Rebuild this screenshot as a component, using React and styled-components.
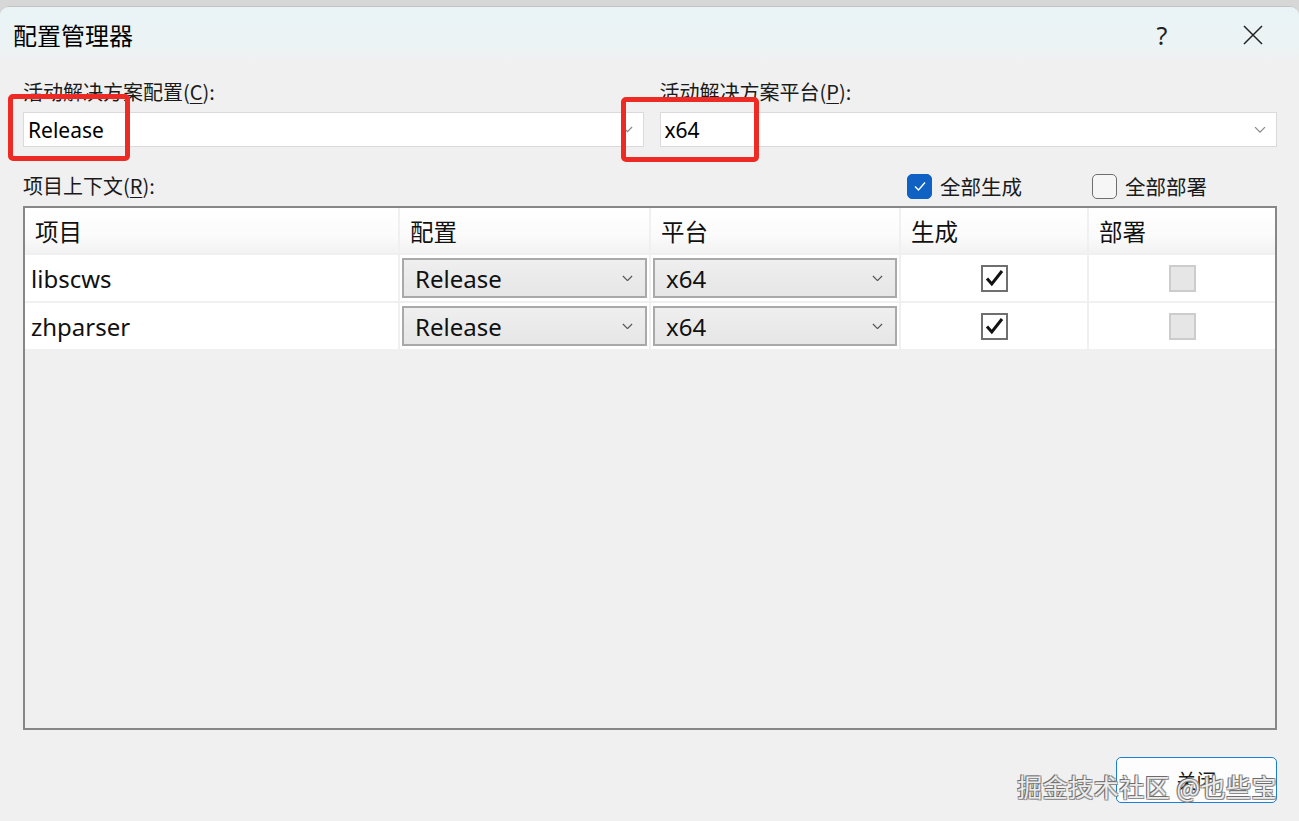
import styled, { createGlobalStyle } from 'styled-components';

const GlobalStyle = createGlobalStyle`
  html, body {
    margin: 0;
    padding: 0;
    background: #d7d7d7;
    overflow: hidden;
  }
  body {
    font-family: "Noto Sans", "Noto Sans CJK SC", sans-serif;
    color: #000;
  }
`;

const Window = styled.div`
  position: relative;
  margin-top: 6px;
  height: 815px;
  background: #f0f0f0;
  border-radius: 9px 9px 0 0;
  border-top: 1px solid #c4c4c4;
  box-sizing: border-box;
  display: flex;
  flex-direction: column;
`;

const TitleBar = styled.div`
  height: 56px;
  display: flex;
  align-items: center;
  padding: 0 31px 0 13px;
  gap: 61px;
  border-radius: 9px 9px 0 0;
  background: linear-gradient(180deg, #e9f3f6 0%, #ecf3f4 70%, #f0f0f0 100%);
`;

const Title = styled.div`
  flex: 1;
  font-family: "Noto Sans CJK SC", sans-serif;
  font-size: 24px;
  padding-bottom: 2px;
`;

const TitleButton = styled.div`
  width: 30px;
  display: flex;
  justify-content: center;
  align-items: center;
  font-family: "Noto Sans", sans-serif;
  font-size: 25px;
  color: #222;
`;

const Body = styled.div`
  flex: 1;
  display: flex;
  flex-direction: column;
  padding: 16px 22px 0 23px;
`;

const TopRow = styled.div`
  display: flex;
  gap: 16px;
`;

const Field = styled.div`
  flex: ${p => p.$flex};
  display: flex;
  flex-direction: column;
  gap: 7px;
`;

const Label = styled.div`
  font-family: "Noto Sans CJK SC", sans-serif;
  font-size: 20px;
  line-height: 26px;
  color: #1a1a1a;
  u { text-decoration-thickness: 1px; text-underline-offset: 3px; }
`;

const Combo = styled.div`
  height: 35px;
  box-sizing: border-box;
  background: #fff;
  border: 1px solid #dadada;
  display: flex;
  align-items: center;
  padding: 0 10px 0 4px;
  font-size: 21px;
`;

const ComboText = styled.span`
  flex: 1;
`;

const Chevron = ({ color = '#6b6b6b', size = 12 }) => (
  <svg width={size} height={size * 0.6} viewBox="0 0 12 7" fill="none">
    <path d="M1 1l5 5 5-5" stroke={color} strokeWidth="1.3" />
  </svg>
);

const ContextRow = styled.div`
  display: flex;
  align-items: center;
  margin-top: 26px;
  height: 26px;
`;

const Spacer = styled.div`
  flex: 1;
`;

const CheckLabel = styled.label`
  display: flex;
  align-items: center;
  gap: 8px;
  width: ${p => p.$w}px;
  font-family: "Noto Sans CJK SC", sans-serif;
  font-size: 20.5px;
  color: #1a1a1a;
`;

const FluentBox = styled.span`
  width: 25px;
  height: 25px;
  box-sizing: border-box;
  border-radius: 5px;
  display: flex;
  align-items: center;
  justify-content: center;
  background: ${p => (p.$on ? '#0f62c4' : '#f6f6f6')};
  border: 1.5px solid ${p => (p.$on ? '#0f62c4' : '#6e6e6e')};
`;

const Table = styled.div`
  margin-top: 7px;
  height: 524px;
  box-sizing: border-box;
  border: 2px solid #878787;
  background: #f0f0f0;
  display: grid;
  grid-template-columns: 373px 249px 248px 186px 1fr;
  grid-auto-rows: min-content;
  column-gap: 2px;
  row-gap: 2px;
`;

const HeadCell = styled.div`
  height: 45px;
  display: flex;
  align-items: center;
  padding-left: 10px;
  background: linear-gradient(180deg, #ffffff 0%, #fbfbfb 60%, #f2f2f2 100%);
  font-family: "Noto Sans CJK SC", sans-serif;
  font-size: 23.5px;
  color: #111;
`;

const Cell = styled.div`
  height: 46px;
  background: #fff;
  display: flex;
  align-items: center;
  justify-content: ${p => (p.$center ? 'center' : 'flex-start')};
  padding: ${p => (p.$pad ? '0 0 0 6px' : '0 2px')};
  font-size: 24px;
  color: #111;
`;

const CellSelect = styled.div`
  flex: 1;
  height: 40px;
  box-sizing: border-box;
  border: 2px solid #a9a9a9;
  background: linear-gradient(180deg, #efefef 0%, #e6e6e6 100%);
  display: flex;
  align-items: center;
  padding: 0 12px 0 11px;
  font-size: 24px;
`;

const GridBox = styled.span`
  width: 27px;
  height: 27px;
  box-sizing: border-box;
  border: 2px solid ${p => (p.$disabled ? '#cccccc' : '#6f6f6f')};
  background: ${p => (p.$disabled ? '#e6e6e6' : '#fff')};
  display: flex;
  align-items: center;
  justify-content: center;
`;

const Footer = styled.div`
  display: flex;
  justify-content: flex-end;
  margin-top: 27px;
`;

const CloseButton = styled.div`
  width: 161px;
  height: 46px;
  box-sizing: border-box;
  border: 1px solid #1a7fd0;
  border-radius: 5px;
  background: #fdfdfd;
  display: flex;
  align-items: center;
  justify-content: center;
  font-family: "Noto Sans CJK SC", sans-serif;
  font-size: 20px;
  color: #1a1a1a;
`;

const Highlight = styled.div`
  position: absolute;
  left: ${p => p.$x}px;
  top: ${p => p.$y}px;
  width: ${p => p.$w}px;
  height: ${p => p.$h}px;
  box-sizing: border-box;
  border: 5px solid #ee2a24;
  border-radius: 5px;
  pointer-events: none;
`;

const Watermark = styled.div`
  position: absolute;
  right: 22px;
  bottom: 17px;
  font-family: "Noto Sans CJK SC", sans-serif;
  font-size: 25px;
  letter-spacing: 0.5px;
  color: #ececec;
  text-shadow: -1px -1px 0 #6c6c6c, 1px 1px 0 #8a8a8a, 1px -1px 0 #9a9a9a, -1px 1px 0 #9a9a9a;
  pointer-events: none;
`;

const Tick = () => (
  <svg width="19" height="18" viewBox="0 0 19 18" fill="none">
    <path d="M2 9.5l4.8 5.5L17 2" stroke="#111" strokeWidth="3" />
  </svg>
);

const SmallTick = () => (
  <svg width="14" height="12" viewBox="0 0 14 12" fill="none">
    <path d="M2 6.5l3.5 3.5L12 2.5" stroke="#fff" strokeWidth="1.4" />
  </svg>
);

const rows = [
  { name: 'libscws', config: 'Release', platform: 'x64' },
  { name: 'zhparser', config: 'Release', platform: 'x64' },
];

export default function App() {
  return (
    <>
      <GlobalStyle />
      <Window>
        <TitleBar>
          <Title>配置管理器</Title>
          <TitleButton>?</TitleButton>
          <TitleButton>
            <svg width="22" height="22" viewBox="0 0 22 22">
              <path d="M2 2l18 18M20 2L2 20" stroke="#222" strokeWidth="1.5" />
            </svg>
          </TitleButton>
        </TitleBar>
        <Body>
          <TopRow>
            <Field $flex="620">
              <Label>活动解决方案配置(<u>C</u>):</Label>
              <Combo>
                <ComboText>Release</ComboText>
                <Chevron color="#8a8a8a" size={11} />
              </Combo>
            </Field>
            <Field $flex="617">
              <Label>活动解决方案平台(<u>P</u>):</Label>
              <Combo>
                <ComboText>x64</ComboText>
                <Chevron color="#8a8a8a" size={12} />
              </Combo>
            </Field>
          </TopRow>

          <ContextRow>
            <Label>项目上下文(<u>R</u>):</Label>
            <Spacer />
            <CheckLabel $w={185}>
              <FluentBox $on><SmallTick /></FluentBox>
              全部生成
            </CheckLabel>
            <CheckLabel $w={185}>
              <FluentBox />
              全部部署
            </CheckLabel>
          </ContextRow>

          <Table>
            <HeadCell>项目</HeadCell>
            <HeadCell>配置</HeadCell>
            <HeadCell>平台</HeadCell>
            <HeadCell>生成</HeadCell>
            <HeadCell>部署</HeadCell>
            {rows.map(r => [
              <Cell key={r.name + 'n'} $pad>{r.name}</Cell>,
              <Cell key={r.name + 'c'}>
                <CellSelect>
                  <ComboText>{r.config}</ComboText>
                  <Chevron color="#555" size={11} />
                </CellSelect>
              </Cell>,
              <Cell key={r.name + 'p'}>
                <CellSelect>
                  <ComboText>{r.platform}</ComboText>
                  <Chevron color="#555" size={11} />
                </CellSelect>
              </Cell>,
              <Cell key={r.name + 'b'} $center>
                <GridBox><Tick /></GridBox>
              </Cell>,
              <Cell key={r.name + 'd'} $center>
                <GridBox $disabled />
              </Cell>,
            ])}
          </Table>

          <Footer>
            <CloseButton>关闭</CloseButton>
          </Footer>
        </Body>
        <Watermark>掘金技术社区 @也些宝</Watermark>
        <Highlight $x={8} $y={87} $w={122} $h={67} />
        <Highlight $x={621} $y={90} $w={138} $h={65} />
      </Window>
    </>
  );
}
